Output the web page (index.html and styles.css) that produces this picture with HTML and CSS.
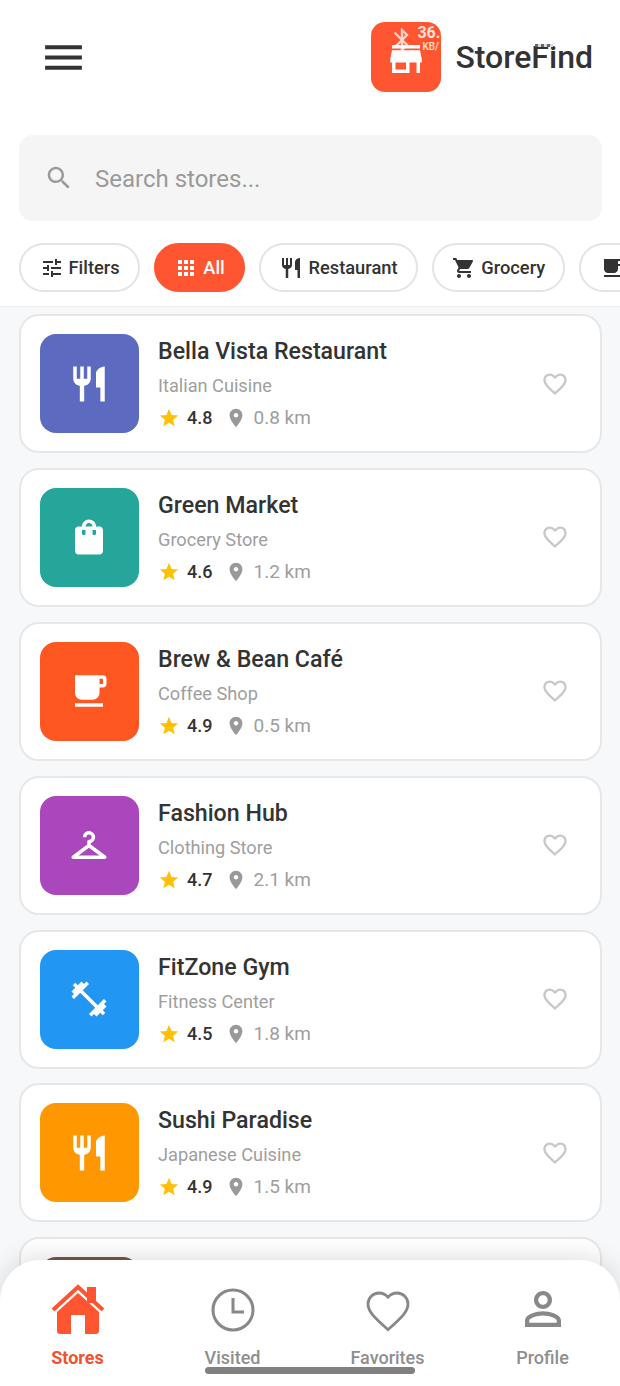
FILE: index.html
```html
<!DOCTYPE html>
<html>

<head>
  <meta name="viewport" content="width=device-width, initial-scale=1.0" />
  <title>StoreFind</title>
  <link rel="stylesheet" href="styles.css">
</head>

<body>
  <svg class="sprite" xmlns="http://www.w3.org/2000/svg">
    <symbol id="i-restaurant" viewBox="0 0 24 24"><path d="M11 9H9V2H7v7H5V2H3v7c0 2.12 1.66 3.84 3.75 3.97V22h2.5v-9.03C11.34 12.84 13 11.12 13 9V2h-2v7zm5-3v8h2.5v8H21V2c-2.76 0-5 2.24-5 4z"/></symbol>
    <symbol id="i-bag" viewBox="0 0 24 24"><path fill-rule="evenodd" d="M18 6h-2c0-2.21-1.79-4-4-4S8 3.79 8 6H6c-1.1 0-2 .9-2 2v12c0 1.1.9 2 2 2h12c1.1 0 2-.9 2-2V8c0-1.1-.9-2-2-2zm-8 4c0 .55-.45 1-1 1s-1-.45-1-1V8h2v2zm2-6c1.1 0 2 .9 2 2h-4c0-1.1.9-2 2-2zm4 6c0 .55-.45 1-1 1s-1-.45-1-1V8h2v2z"/></symbol>
    <symbol id="i-cafe" viewBox="0 0 24 24"><path d="M20 3H4v10c0 2.21 1.79 4 4 4h6c2.21 0 4-1.79 4-4v-3h2c1.11 0 2-.89 2-2V5c0-1.11-.89-2-2-2zm0 5h-2V5h2v3zM4 19h16v2H4z"/></symbol>
    <symbol id="i-hanger" viewBox="0 0 24 24"><path d="M21.6 18.2 13 11.75v-.91c1.65-.49 2.8-2.17 2.43-4.05-.26-1.31-1.3-2.4-2.61-2.7C10.54 3.57 8.5 5.3 8.5 7.5h2c0-.83.67-1.5 1.5-1.5s1.5.67 1.5 1.5c0 .84-.69 1.52-1.53 1.5-.54-.01-.97.45-.97.99v1.76L2.4 18.2c-.77.58-.36 1.8.6 1.8h18c.96 0 1.37-1.22.6-1.8zM6 18l6-4.5 6 4.5H6z"/></symbol>
    <symbol id="i-gym" viewBox="0 0 24 24"><path d="M20.57 14.86L22 13.43 20.57 12 17 15.57 8.43 7 12 3.43 10.57 2 9.14 3.43 7.71 2 5.57 4.14 4.14 2.71 2.71 4.14l1.43 1.43L2 7.71l1.43 1.43L2 10.57 3.43 12 7 8.43 15.57 17 12 20.57 13.43 22l1.43-1.43L16.29 22l2.14-2.14 1.43 1.43 1.43-1.43-1.43-1.43L22 16.29z"/></symbol>
    <symbol id="i-star" viewBox="0 0 24 24"><path d="M12 17.27L18.18 21l-1.64-7.03L22 9.24l-7.19-.61L12 2 9.19 8.63 2 9.24l5.46 4.73L5.82 21z"/></symbol>
    <symbol id="i-place" viewBox="0 0 24 24"><path d="M12 2C8.13 2 5 5.13 5 9c0 5.25 7 13 7 13s7-7.75 7-13c0-3.87-3.13-7-7-7zm0 9.5c-1.38 0-2.5-1.12-2.5-2.5s1.12-2.5 2.5-2.5 2.5 1.12 2.5 2.5-1.12 2.5-2.5 2.5z"/></symbol>
    <symbol id="i-heart" viewBox="0 0 24 24"><path d="M16.5 3c-1.74 0-3.41.81-4.5 2.09C10.91 3.81 9.24 3 7.5 3 4.42 3 2 5.42 2 8.5c0 3.78 3.4 6.86 8.55 11.54L12 21.35l1.45-1.32C18.6 15.36 22 12.28 22 8.5 22 5.42 19.58 3 16.5 3zm-4.4 15.55l-.1.1-.1-.1C7.14 14.24 4 11.39 4 8.5 4 6.5 5.5 5 7.5 5c1.54 0 3.04.99 3.57 2.36h1.87C13.46 5.99 14.96 5 16.5 5c2 0 3.5 1.5 3.5 3.5 0 2.89-3.14 5.74-7.9 10.05z"/></symbol>
  </svg>

  <div class="app">
    <div class="top">
      <div class="header">
        <svg class="menu-icon" viewBox="0 0 24 24"><path d="M3 18h18v-2H3v2zm0-5h18v-2H3v2zm0-7v2h18V6H3z"/></svg>
        <div class="brand">
          <div class="logo">
            <svg class="logo-bt" viewBox="0 0 24 24"><path d="M17.71 7.71L12 2h-1v7.59L6.41 5 5 6.41 10.59 12 5 17.59 6.41 19 11 14.41V22h1l5.71-5.71-4.3-4.29 4.3-4.29zM13 5.83l1.88 1.88L13 9.59V5.83zm1.88 10.46L13 18.17v-3.76l1.88 1.88z"/></svg>
            <span class="logo-speed">36.</span>
            <span class="logo-unit">KB/</span>
            <svg class="logo-store" viewBox="0 0 24 24"><path d="M20 4H4v2h16V4zm1 10v-2l-1-5H4l-1 5v2h1v6h10v-6h4v6h2v-6h1zm-9 4H6v-4h6v4z"/></svg>
          </div>
          <div class="brand-name">StoreFind<span class="brand-dots"></span></div>
        </div>
      </div>

      <div class="search">
        <svg class="search-icon" viewBox="0 0 24 24"><path d="M15.5 14h-.79l-.28-.27C15.41 12.59 16 11.11 16 9.5 16 5.91 13.09 3 9.5 3S3 5.91 3 9.5 5.91 16 9.5 16c1.61 0 3.09-.59 4.23-1.57l.27.28v.79l5 4.99L20.49 19l-4.99-5zm-6 0C7.01 14 5 11.99 5 9.5S7.01 5 9.5 5 14 7.01 14 9.5 11.99 14 9.5 14z"/></svg>
        <span class="search-text">Search stores...</span>
      </div>

      <div class="chips">
        <div class="chip">
          <svg viewBox="0 0 24 24"><path d="M3 17v2h6v-2H3zM3 5v2h10V5H3zm10 16v-2h8v-2h-8v-2h-2v6h2zM7 9v2H3v2h4v2h2V9H7zm14 4v-2H11v2h10zm-6-4h2V7h4V5h-4V3h-2v6z"/></svg>
          Filters
        </div>
        <div class="chip active">
          <svg viewBox="0 0 24 24"><path d="M4 8h4V4H4v4zm6 12h4v-4h-4v4zm-6 0h4v-4H4v4zm0-6h4v-4H4v4zm6 0h4v-4h-4v4zm6-10v4h4V4h-4zm-6 4h4V4h-4v4zm6 6h4v-4h-4v4zm0 6h4v-4h-4v4z"/></svg>
          All
        </div>
        <div class="chip">
          <svg viewBox="0 0 24 24"><use href="#i-restaurant"/></svg>
          Restaurant
        </div>
        <div class="chip">
          <svg viewBox="0 0 24 24"><path d="M7 18c-1.1 0-1.99.9-1.99 2S5.9 22 7 22s2-.9 2-2-.9-2-2-2zM1 2v2h2l3.6 7.59-1.35 2.45c-.16.28-.25.61-.25.96 0 1.1.9 2 2 2h12v-2H7.42c-.14 0-.25-.11-.25-.25l.03-.12.9-1.63h7.45c.75 0 1.41-.41 1.75-1.03l3.58-6.49c.08-.14.12-.31.12-.48 0-.55-.45-1-1-1H5.21l-.94-2H1zm16 16c-1.1 0-1.99.9-1.99 2s.89 2 1.99 2 2-.9 2-2-.9-2-2-2z"/></svg>
          Grocery
        </div>
        <!-- cut off by the screen edge, only its icon shows -->
        <div class="chip chip-cut">
          <svg viewBox="0 0 24 24"><use href="#i-cafe"/></svg>
        </div>
      </div>
    </div>

    <div class="list">
      <div class="card">
        <div class="thumb indigo"><svg viewBox="0 0 24 24"><use href="#i-restaurant"/></svg></div>
        <div class="info">
          <div class="name">Bella Vista Restaurant</div>
          <div class="kind">Italian Cuisine</div>
          <div class="meta">
            <svg class="star" viewBox="0 0 24 24"><use href="#i-star"/></svg><span class="rating">4.8</span>
            <svg class="pin" viewBox="0 0 24 24"><use href="#i-place"/></svg><span class="dist">0.8 km</span>
          </div>
        </div>
        <svg class="fav" viewBox="0 0 24 24"><use href="#i-heart"/></svg>
      </div>

      <div class="card">
        <div class="thumb teal"><svg viewBox="0 0 24 24"><use href="#i-bag"/></svg></div>
        <div class="info">
          <div class="name">Green Market</div>
          <div class="kind">Grocery Store</div>
          <div class="meta">
            <svg class="star" viewBox="0 0 24 24"><use href="#i-star"/></svg><span class="rating">4.6</span>
            <svg class="pin" viewBox="0 0 24 24"><use href="#i-place"/></svg><span class="dist">1.2 km</span>
          </div>
        </div>
        <svg class="fav" viewBox="0 0 24 24"><use href="#i-heart"/></svg>
      </div>

      <div class="card">
        <div class="thumb orange"><svg viewBox="0 0 24 24"><use href="#i-cafe"/></svg></div>
        <div class="info">
          <div class="name">Brew &amp; Bean Café</div>
          <div class="kind">Coffee Shop</div>
          <div class="meta">
            <svg class="star" viewBox="0 0 24 24"><use href="#i-star"/></svg><span class="rating">4.9</span>
            <svg class="pin" viewBox="0 0 24 24"><use href="#i-place"/></svg><span class="dist">0.5 km</span>
          </div>
        </div>
        <svg class="fav" viewBox="0 0 24 24"><use href="#i-heart"/></svg>
      </div>

      <div class="card">
        <div class="thumb purple"><svg viewBox="0 0 24 24"><use href="#i-hanger"/></svg></div>
        <div class="info">
          <div class="name">Fashion Hub</div>
          <div class="kind">Clothing Store</div>
          <div class="meta">
            <svg class="star" viewBox="0 0 24 24"><use href="#i-star"/></svg><span class="rating">4.7</span>
            <svg class="pin" viewBox="0 0 24 24"><use href="#i-place"/></svg><span class="dist">2.1 km</span>
          </div>
        </div>
        <svg class="fav" viewBox="0 0 24 24"><use href="#i-heart"/></svg>
      </div>

      <div class="card">
        <div class="thumb blue"><svg viewBox="0 0 24 24"><use href="#i-gym"/></svg></div>
        <div class="info">
          <div class="name">FitZone Gym</div>
          <div class="kind">Fitness Center</div>
          <div class="meta">
            <svg class="star" viewBox="0 0 24 24"><use href="#i-star"/></svg><span class="rating">4.5</span>
            <svg class="pin" viewBox="0 0 24 24"><use href="#i-place"/></svg><span class="dist">1.8 km</span>
          </div>
        </div>
        <svg class="fav" viewBox="0 0 24 24"><use href="#i-heart"/></svg>
      </div>

      <div class="card">
        <div class="thumb amber"><svg viewBox="0 0 24 24"><use href="#i-restaurant"/></svg></div>
        <div class="info">
          <div class="name">Sushi Paradise</div>
          <div class="kind">Japanese Cuisine</div>
          <div class="meta">
            <svg class="star" viewBox="0 0 24 24"><use href="#i-star"/></svg><span class="rating">4.9</span>
            <svg class="pin" viewBox="0 0 24 24"><use href="#i-place"/></svg><span class="dist">1.5 km</span>
          </div>
        </div>
        <svg class="fav" viewBox="0 0 24 24"><use href="#i-heart"/></svg>
      </div>

      <!-- only the top of this one shows above the nav -->
      <div class="card">
        <div class="thumb brown"></div>
      </div>
    </div>

    <div class="nav">
      <div class="nav-item active">
        <svg class="nav-icon" viewBox="0 0 54 54">
          <rect x="36" y="5" width="9" height="16"/>
          <path d="M27 11 6 30v19a3 3 0 0 0 3 3h11V33h14v19h11a3 3 0 0 0 3-3V30z"/>
          <path class="roof" d="M2 28 27 5l25 23"/>
        </svg>
        <span>Stores</span>
      </div>
      <div class="nav-item">
        <svg class="nav-icon line" viewBox="0 0 54 54">
          <circle cx="27" cy="28" r="20"/>
          <path d="M27 16v14h11"/>
        </svg>
        <span>Visited</span>
      </div>
      <div class="nav-item">
        <svg class="nav-icon line" viewBox="0 0 27 27">
          <path class="thin" d="M13.5 23.85l-1.45-1.32C6.9 17.86 3.5 14.78 3.5 11 3.5 7.92 5.92 5.5 9 5.5c1.74 0 3.41.81 4.5 2.09C14.59 6.31 16.26 5.5 18 5.5c3.08 0 5.5 2.42 5.5 5.5 0 3.78-3.4 6.86-8.55 11.54l-1.45 1.31z"/>
        </svg>
        <span>Favorites</span>
      </div>
      <div class="nav-item">
        <svg class="nav-icon" viewBox="0 0 24 24"><path d="M12 5.9c1.16 0 2.1.94 2.1 2.1s-.94 2.1-2.1 2.1S9.9 9.16 9.9 8s.94-2.1 2.1-2.1m0 9c2.97 0 6.1 1.46 6.1 2.1v1.1H5.9V17c0-.64 3.13-2.1 6.1-2.1M12 4C9.79 4 8 5.79 8 8s1.79 4 4 4 4-1.79 4-4-1.79-4-4-4zm0 9c-2.67 0-8 1.34-8 4v3h16v-3c0-2.66-5.33-4-8-4z"/></svg>
        <span>Profile</span>
      </div>
    </div>

    <div class="home-bar"></div>
  </div>
</body>

</html>
```

FILE: styles.css
```css
body {
  margin: 0px;
  padding: 0px;
  overflow: hidden;
  font-family: Roboto, "Liberation Sans", sans-serif;
  background-color: #f7f8fa;
}

.sprite {
  display: none;
}

.app {
  position: relative;
  display: flex;
  flex-direction: column;
  height: 1386px;
  overflow: hidden;
}

.top {
  background-color: white;
  border-bottom: 1px solid #eeeeee;
}

.header {
  display: flex;
  align-items: center;
  justify-content: space-between;
  padding: 22px 27px 43px 39px;
}

.menu-icon {
  width: 49px;
  height: 49px;
  fill: #333333;
}

.brand {
  display: flex;
  align-items: center;
  gap: 14px;
}

.logo {
  position: relative;
  width: 70px;
  height: 70px;
  border-radius: 14px;
  background-color: #ff5530;
  overflow: hidden;
  display: flex;
  justify-content: center;
  padding-top: 16px;
  box-sizing: border-box;
}

.logo-store {
  width: 42px;
  height: 42px;
  fill: white;
}

.logo-bt {
  position: absolute;
  left: 17px;
  top: 3px;
  width: 28px;
  height: 30px;
  fill: rgba(255, 255, 255, 0.75);
}

.logo-speed {
  position: absolute;
  left: 46px;
  top: 1px;
  font-size: 16px;
  font-weight: 700;
  color: #ffe0d8;
}

.logo-unit {
  position: absolute;
  left: 51px;
  top: 19px;
  font-size: 10px;
  font-weight: 500;
  color: #ffe0d8;
}

.brand-name {
  position: relative;
  font-size: 32px;
  font-weight: 500;
  color: #333333;
}

.brand-dots {
  position: absolute;
  left: 80px;
  top: 6px;
  width: 18px;
  height: 3px;
  background: repeating-linear-gradient(90deg, #666666 0 3px, #dddddd 3px 6px);
}

.search {
  display: flex;
  align-items: center;
  height: 86px;
  margin: 0px 18px 0px 19px;
  padding-left: 25px;
  gap: 21px;
  border-radius: 14px;
  background-color: #f5f5f5;
}

.search-icon {
  width: 30px;
  height: 30px;
  fill: #9a9a9a;
}

.search-text {
  padding-top: 2px;
  font-size: 24px;
  color: #9a9a9a;
}

.chips {
  display: flex;
  gap: 14px;
  margin-top: 22px;
  padding: 0px 0px 14px 19px;
  overflow: hidden;
}

.chip {
  display: flex;
  flex-shrink: 0;
  align-items: center;
  gap: 5px;
  height: 49px;
  padding: 0px 18.2px 0px 18.5px;
  box-sizing: border-box;
  border: 2px solid #e4e4e4;
  border-radius: 25px;
  background-color: white;
  font-size: 18.3px;
  font-weight: 500;
  color: #333333;
}

.chip svg {
  width: 24px;
  height: 24px;
  fill: #333333;
}

.chip-cut {
  width: 100px;
}

.chip.active {
  border-color: #ff5530;
  background-color: #ff5530;
  color: white;
}

.chip.active svg {
  fill: white;
}

.list {
  display: flex;
  flex-direction: column;
  gap: 14.9px;
  padding: 7px 18px 0px 19px;
}

.card {
  display: flex;
  flex-shrink: 0;
  align-items: center;
  gap: 19.5px;
  padding: 18px 31px 18px 18.5px;
  border: 2px solid #e6e7e9;
  border-radius: 20px;
  background-color: white;
}

.thumb {
  display: flex;
  flex-shrink: 0;
  align-items: center;
  justify-content: center;
  width: 99px;
  height: 99px;
  border-radius: 16px;
}

.thumb svg {
  width: 42px;
  height: 42px;
  fill: white;
}

.indigo { background-color: #5c6bc0; }
.teal { background-color: #26a69a; }
.orange { background-color: #ff5722; }
.purple { background-color: #ab47bc; }
.blue { background-color: #2196f3; }
.amber { background-color: #ff9800; }
.brown { background-color: #795548; }

.info {
  flex: 1;
  min-width: 0;
}

.name {
  font-size: 23.2px;
  font-weight: 500;
  line-height: 30px;
  color: #333333;
}

.kind {
  margin-top: 7px;
  font-size: 18.2px;
  line-height: 26px;
  color: #9e9e9e;
}

.meta {
  display: flex;
  align-items: center;
  margin-top: 6px;
  font-size: 18px;
  line-height: 26px;
}

.star {
  width: 22px;
  height: 22px;
  fill: #ffc107;
  margin-right: 7px;
}

.rating {
  font-weight: 500;
  color: #333333;
  margin-right: 13px;
}

.pin {
  width: 22px;
  height: 22px;
  fill: #999999;
  margin-right: 6px;
}

.dist {
  font-size: 19px;
  color: #9e9e9e;
}

.fav {
  width: 28px;
  height: 28px;
  fill: #c8c8c8;
}

.nav {
  position: absolute;
  left: 0px;
  right: 0px;
  bottom: 0px;
  height: 126px;
  display: flex;
  border-radius: 40px 40px 0px 0px;
  background-color: white;
  box-shadow: 0 -4px 24px rgba(0, 0, 0, 0.12);
}

.nav-item {
  flex: 1;
  display: flex;
  flex-direction: column;
  align-items: center;
  padding-top: 22px;
  font-size: 18px;
  font-weight: 500;
  color: #8e8e8e;
}

.nav-item span {
  margin-top: 9px;
  line-height: 26px;
}

.nav-icon {
  width: 54px;
  height: 54px;
  fill: #888888;
}

.nav-icon.line {
  fill: none;
  stroke: #888888;
  stroke-width: 3;
}

.nav-icon .thin {
  stroke-width: 1.4;
}

.nav-item.active {
  font-weight: 700;
  color: #f0532f;
}

.nav-item.active .nav-icon {
  fill: #ff5530;
}

.roof {
  fill: none;
  stroke: #ff5530;
  stroke-width: 4;
}

.home-bar {
  position: absolute;
  left: 205px;
  top: 1367px;
  width: 210px;
  height: 7px;
  border-radius: 4px;
  background-color: #808080;
}
```
